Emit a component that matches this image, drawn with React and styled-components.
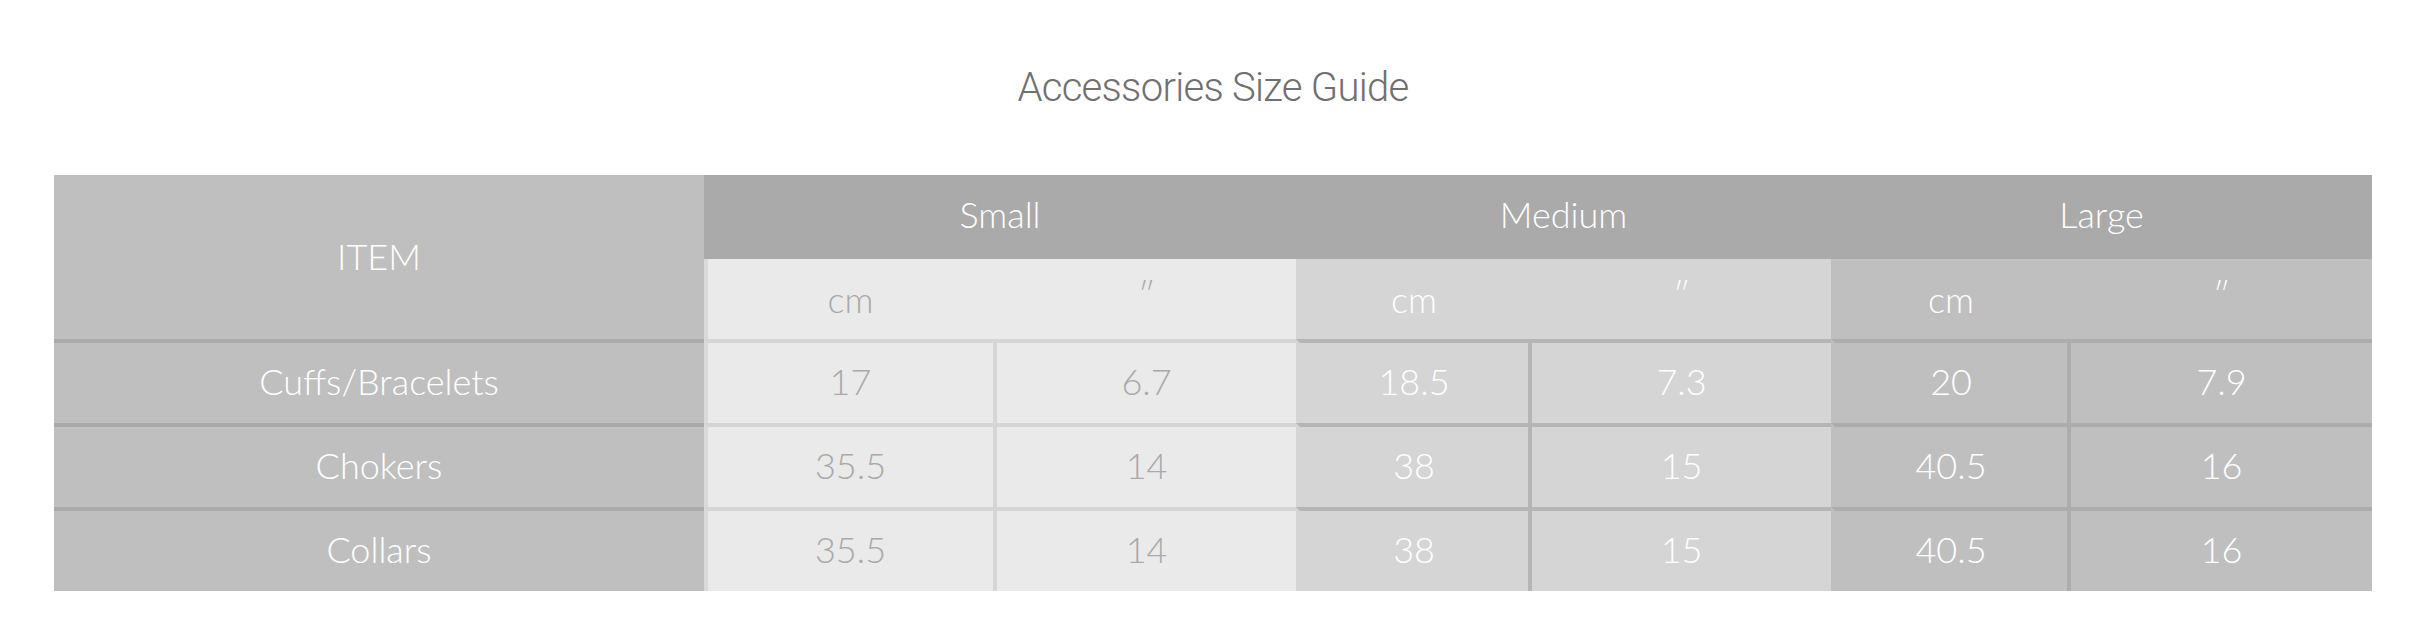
import styled, { createGlobalStyle } from "styled-components";

const GlobalStyle = createGlobalStyle`
  body {
    margin: 0;
    background: #fff;
  }
`;

const tones = {
  small: { bg: "#eaeaea", line: "#d5d5d5", text: "#a9a9a9" },
  medium: { bg: "#d5d5d5", line: "#b5b5b5", text: "#fff" },
  large: { bg: "#bfbfbf", line: "#acacac", text: "#fff" },
};

const groups = [
  { key: "small", label: "Small" },
  { key: "medium", label: "Medium" },
  { key: "large", label: "Large" },
];

const rows = [
  { item: "Cuffs/Bracelets", small: ["17", "6.7"], medium: ["18.5", "7.3"], large: ["20", "7.9"] },
  { item: "Chokers", small: ["35.5", "14"], medium: ["38", "15"], large: ["40.5", "16"] },
  { item: "Collars", small: ["35.5", "14"], medium: ["38", "15"], large: ["40.5", "16"] },
];

// column widths include the 4px left borders
const colWidths = [650, 289, 303, 232, 303, 236, 305];

const Page = styled.div`
  padding: 64px 60px 0 54px;
`;

const Title = styled.h1`
  margin: 0 0 63px;
  font-family: Roboto, "Liberation Sans", sans-serif;
  font-weight: 300;
  font-size: 40px;
  line-height: 48px;
  letter-spacing: -0.7px;
  color: #707070;
  text-align: center;
`;

const SizeTable = styled.table`
  width: 100%;
  table-layout: fixed;
  border-collapse: separate;
  border-spacing: 0;
  font-family: Lato, "Open Sans", sans-serif;
  font-weight: 300;
  font-size: 36px;
  line-height: 1;
  text-align: center;

  th,
  td {
    padding: 0;
    vertical-align: middle;
    font-weight: 300;
  }
`;

const Row = styled.tr`
  height: ${(p) => p.$h}px;
`;

const ItemHead = styled.th`
  background: #bfbfbf;
  color: #fff;
  padding-bottom: 2px !important;
`;

const GroupHead = styled.th`
  background: #aaaaaa;
  color: #fff;
  padding-bottom: 6px !important;
`;

const UnitCell = styled.th`
  background: ${(p) => tones[p.$tone].bg};
  color: ${(p) => tones[p.$tone].text};
  border-left: 4px solid
    ${(p) => (p.$edge ? "#dadada" : tones[p.$tone].bg)};
`;

const Inch = styled.span`
  display: inline-block;
  font-size: 34px;
  transform: translateY(-6px);
`;

const ItemCell = styled.td`
  background: #bfbfbf;
  color: #fff;
  border-top: 4px solid #aaaaaa;
  padding-bottom: 4px !important;
`;

const ValueCell = styled.td`
  background: ${(p) => tones[p.$tone].bg};
  color: ${(p) => tones[p.$tone].text};
  border-top: 4px solid ${(p) => tones[p.$tone].line};
  border-left: 4px solid
    ${(p) =>
      p.$edge ? "#dadada" : p.$divider ? tones[p.$tone].line : tones[p.$tone].bg};
  padding-bottom: 4px !important;
`;

const App = () => {
  return (
    <Page>
      <GlobalStyle />
      <Title>Accessories Size Guide</Title>
      <SizeTable>
        <colgroup>
          {colWidths.map((w, i) => (
            <col key={i} style={{ width: w }} />
          ))}
        </colgroup>
        <thead>
          <Row $h={84}>
            <ItemHead rowSpan={2}>ITEM</ItemHead>
            {groups.map((g) => (
              <GroupHead key={g.key} colSpan={2}>
                {g.label}
              </GroupHead>
            ))}
          </Row>
          <Row $h={80}>
            {groups.map((g) => [
              <UnitCell key={g.key + "cm"} $tone={g.key} $edge={g.key === "small"}>
                cm
              </UnitCell>,
              <UnitCell key={g.key + "in"} $tone={g.key}>
                <Inch>″</Inch>
              </UnitCell>,
            ])}
          </Row>
        </thead>
        <tbody>
          {rows.map((r) => (
            <Row $h={84} key={r.item}>
              <ItemCell>{r.item}</ItemCell>
              {groups.map((g) => [
                <ValueCell key={g.key + "cm"} $tone={g.key} $edge={g.key === "small"}>
                  {r[g.key][0]}
                </ValueCell>,
                <ValueCell key={g.key + "in"} $tone={g.key} $divider>
                  {r[g.key][1]}
                </ValueCell>,
              ])}
            </Row>
          ))}
        </tbody>
      </SizeTable>
    </Page>
  );
};

export default App;
